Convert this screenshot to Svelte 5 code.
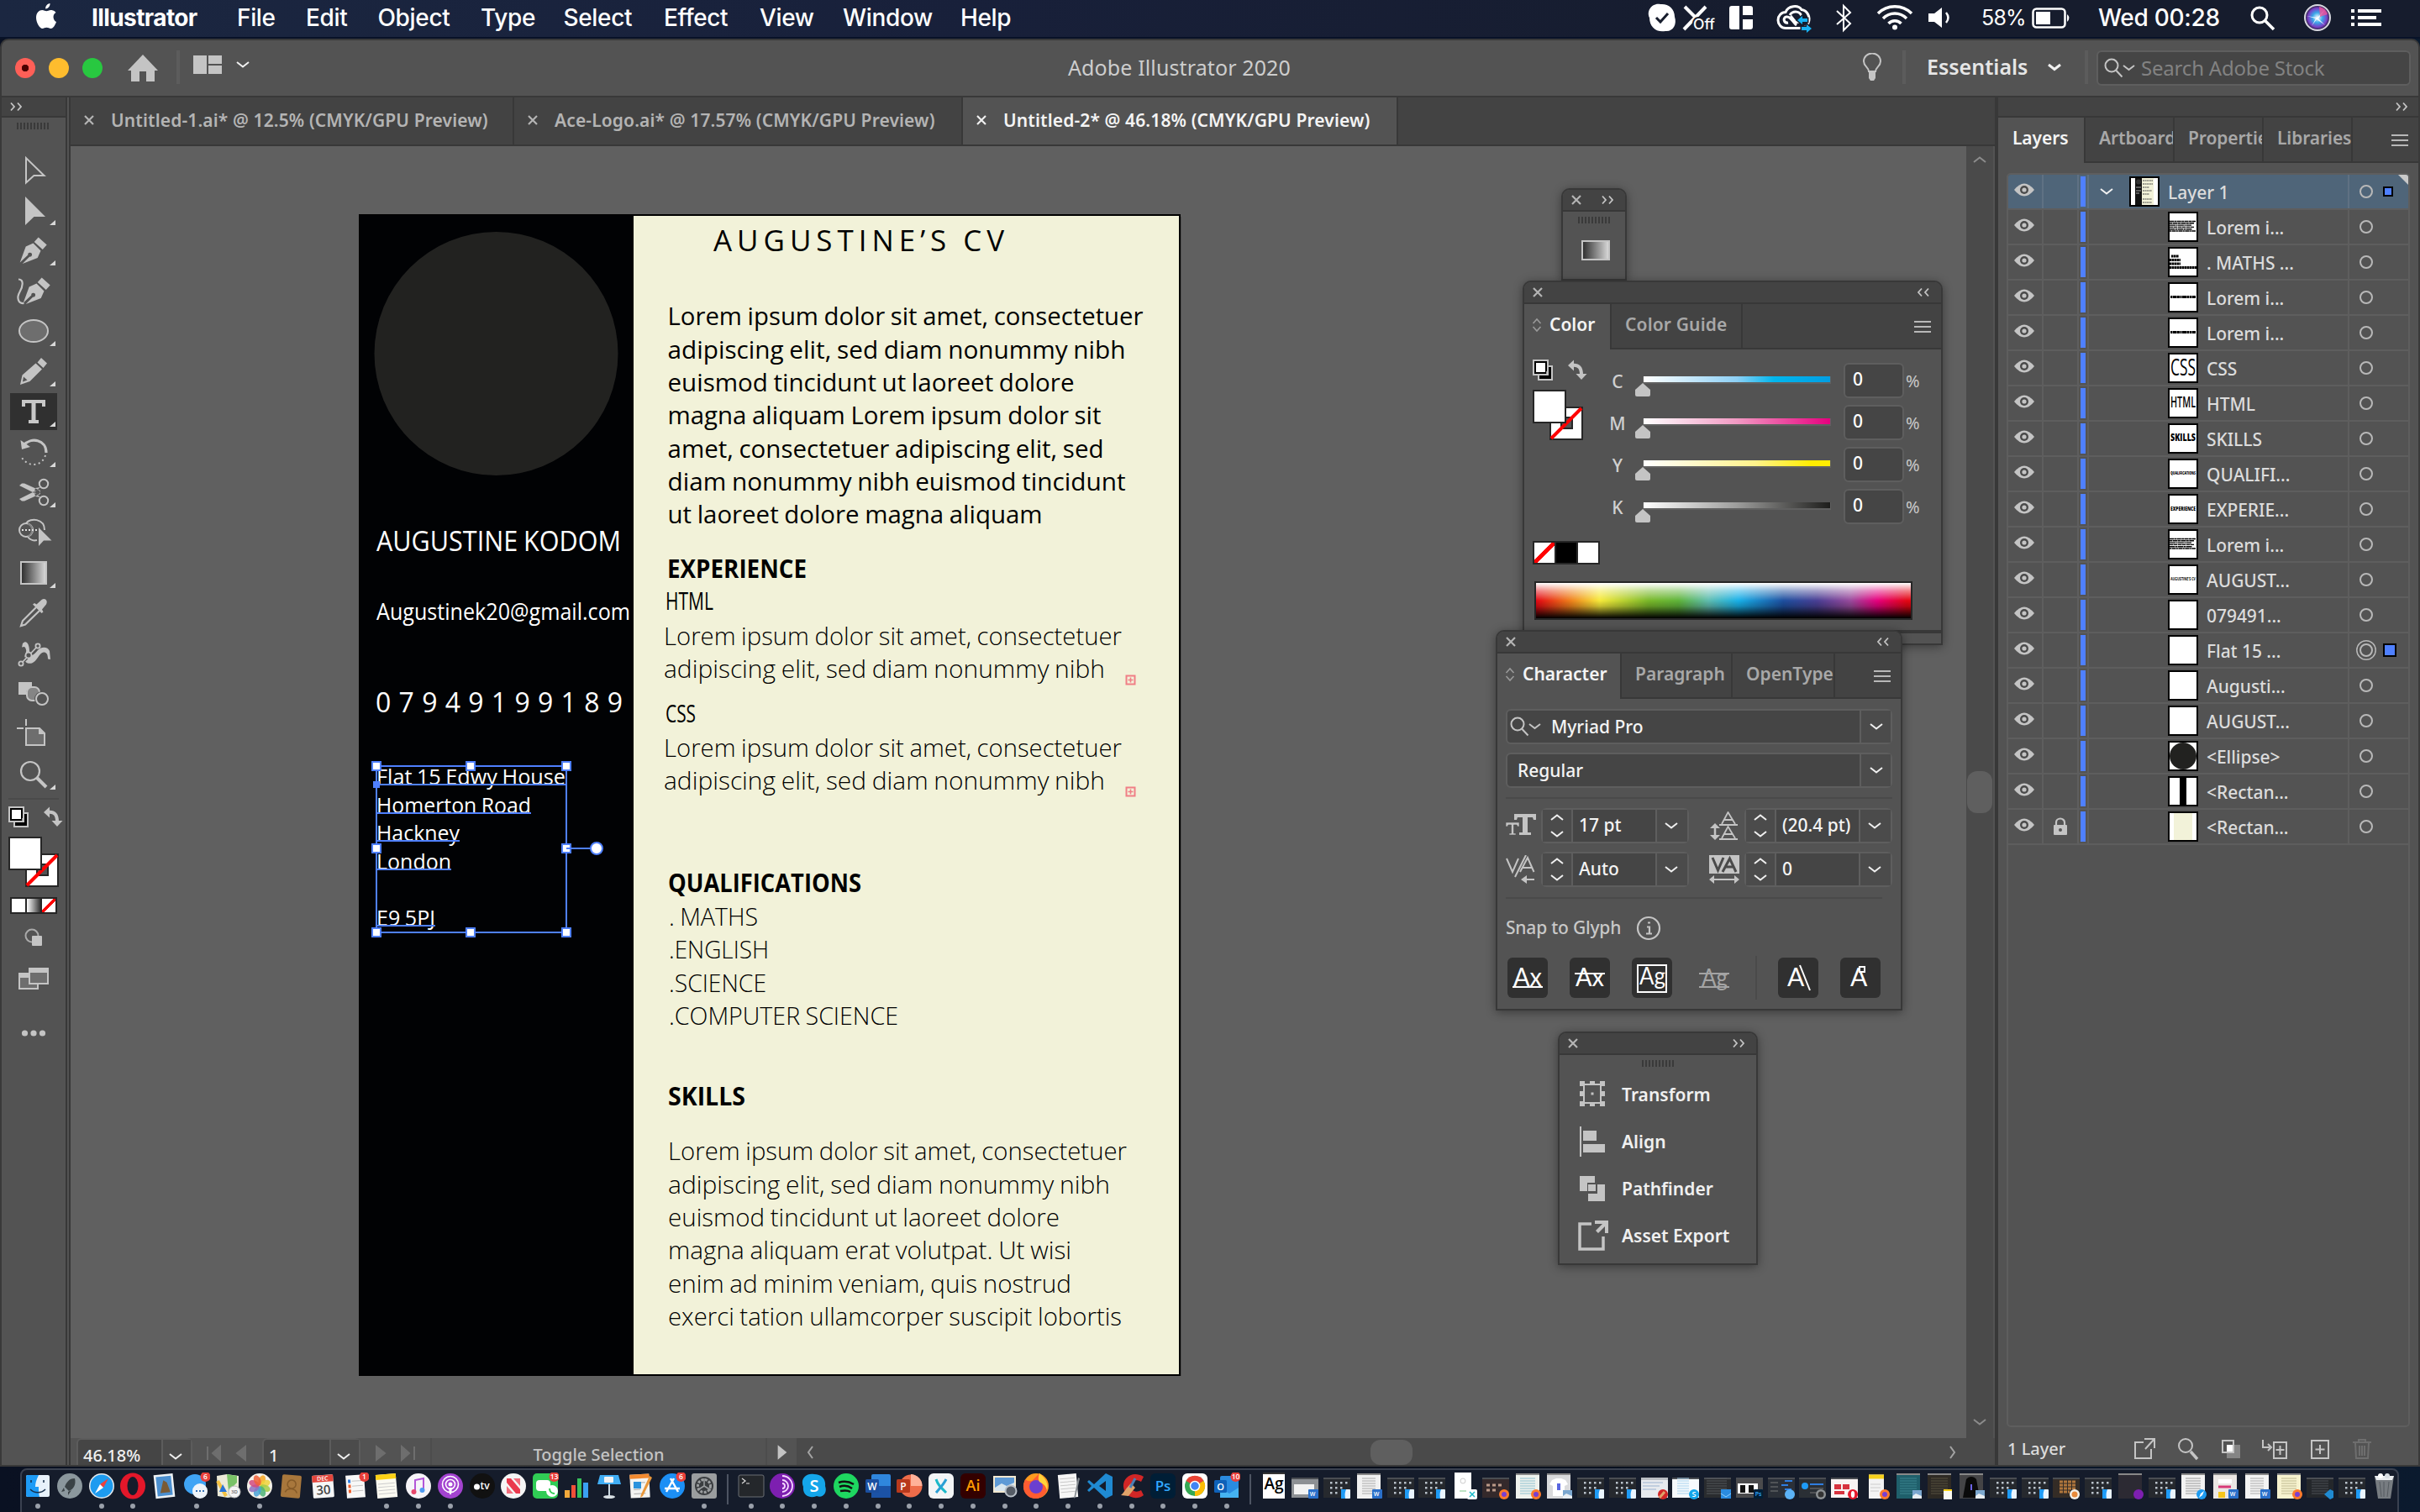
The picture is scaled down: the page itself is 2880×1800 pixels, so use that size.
<script>
  const menus = ['File', 'Edit', 'Object', 'Type', 'Select', 'Effect', 'View', 'Window', 'Help'];

  const docTabs = [
    { title: 'Untitled-1.ai* @ 12.5% (CMYK/GPU Preview)', on: false },
    { title: 'Ace-Logo.ai* @ 17.57% (CMYK/GPU Preview)', on: false },
    { title: 'Untitled-2* @ 46.18% (CMYK/GPU Preview)', on: true }
  ];

  const nib = (dx) => `<g transform="translate(${dx} 0)" fill="#c4c4c4"><path d="M45.7 8.5l10 8.9-5 5.6-10-9z"/><path d="M39.5 15.4l9 9.2-3.8 8.4-18 7 8.6-8.4a2.4 2.4 0 1 0-2-2l-9.6 8.8 7-19z"/></g>`;

  // Each drawing lives in a 76 x 48 slot whose x axis starts at 2.
  const tools = [
    { art: '<path d="M31 10V39.5l9.4-8.5H52.500z" fill="none" stroke="#c4c4c4" stroke-width="2"/>' },
    { more: true, art: '<path d="M30 8V42l10.500-10H54z" fill="#c4c4c4"/>' },
    { more: true, art: nib(0) },
    { art: nib(4) + '<path d="M22 10.500c7 0 5 9 1.500 15-4 7-2 14 5 13.500" fill="none" stroke="#c4c4c4" stroke-width="2.200"/>' },
    { more: true, art: '<ellipse cx="40" cy="24" rx="17" ry="13" fill="#6e6e6e" stroke="#c4c4c4" stroke-width="2"/>' },
    { more: true, art: '<path d="M49 8l7 6.500-4.500 5.500-7-6.500zM42.500 14.500l7.500 7-14.500 14.500-11.500 4 2.500-11.500z" fill="#c4c4c4"/><path d="M28 30.500l4.500 4-5.500 2z" fill="#535353"/>' },
    { more: true, on: true, art: '<path d="M26 10h28v8h-4v-4h-7.500v20h3.500v4h-12v-4h3.500v-20h-7.500v4h-4z" fill="#c8c8c8"/>' },
    { more: true, art: '<path d="M24.500 10l11.500 8-10 3z" fill="#c4c4c4"/><path d="M28 16c9-10 27-7 27 9" fill="none" stroke="#c4c4c4" stroke-width="3.200"/><path d="M54 28c-4 14-22 15-29 1" fill="none" stroke="#c4c4c4" stroke-width="2" stroke-dasharray="2 3.600"/>' },
    { more: true, art: '<g fill="none" stroke="#c4c4c4" stroke-width="2"><circle cx="52" cy="14" r="5.200"/><circle cx="52" cy="34" r="5.200"/></g><path d="M23 16l3-2.500h3L48 22l-1 3.500-2 1.500zM23 32l3 2.500h3L48 26l-1-3.500-2-1.500zM41 24l7 6-6-1zM41 24l7-6-6 1z" fill="#c4c4c4"/>' },
    { more: false, art: '<circle cx="31" cy="21" r="8" fill="none" stroke="#c4c4c4" stroke-width="2"/><path d="M33 13.500a8 8 0 0 1 0 15" fill="none" stroke="#858585" stroke-width="2"/><path d="M31 13C36 6 53 7 53 21M33 29c3 4 7 5 11 4" fill="none" stroke="#c4c4c4" stroke-width="2"/><path d="M26 21h19" stroke="#e0e0e0" stroke-width="2" stroke-dasharray="2 2"/><path d="M46 18v22l6-6.500h9.500z" fill="#c4c4c4"/>' },
    { more: true, art: '<rect x="25" y="11" width="30" height="26" fill="url(#grey)" stroke="#c4c4c4" stroke-width="2"/>' },
    { art: '<path d="M43 17L27 33l-2 6 5-1.500L47 21" fill="none" stroke="#c4c4c4" stroke-width="2.200"/><path d="M39 13.500l2-1.500 2.500 1.500 6-5.500c4-3 8 1 5.500 5.500l-5 6 1.500 3-2 1.500z" fill="#c4c4c4"/>' },
    { art: '<path d="M27 12c5-5 8 2 8 9l-2 6c5 0 8-2 12-7 5-5 12-4 14 1l1 10-3-.500c0-6-2-8-5-8-5 0-8 11-14 13-5 1-9-1-9-5 0-5 3-8 2-11-1-4-2-4-5-3z" fill="#c4c4c4"/><path d="M26 35L45 15" stroke="#535353" stroke-width="4"/><path d="M26 35L45 15" stroke="#c4c4c4" stroke-width="1.800"/><g fill="#535353" stroke="#c4c4c4" stroke-width="1.800"><circle cx="25" cy="36" r="2.600"/><circle cx="45" cy="15" r="2.600"/><circle cx="34" cy="26" r="3.500"/></g>' },
    { art: '<path d="M22 10h16v6c-5 0-7 4-7 9h-9z" fill="#c4c4c4"/><rect x="32" y="16" width="15" height="16" rx="6" fill="#858585" stroke="#c4c4c4" stroke-width="2"/><circle cx="50" cy="30" r="9" fill="#535353"/><circle cx="50" cy="30" r="7" fill="#535353" stroke="#c4c4c4" stroke-width="2"/>' },
    { art: '<path d="M31 6v8M20 17h8" stroke="#c4c4c4" stroke-width="2"/><path d="M31 17h16l6 6v14H31z" fill="#6e6e6e" stroke="#c4c4c4" stroke-width="2"/><path d="M46 17v7h7z" fill="#c4c4c4"/>' },
    { more: true, art: '<circle cx="36" cy="20" r="11" fill="none" stroke="#c4c4c4" stroke-width="2.200"/><path d="M44 28l11 11" stroke="#c4c4c4" stroke-width="4"/>' }
  ];

  // [text, x, baseline, width, size, weight, colour]
  const copy = [
    ['AUGUSTINE KODOM', 448, 656, 291, 33, 400, '#fff'],
    ['Augustinek20@gmail.com', 448, 738, 302, 26.5, 400, '#fff'],
    ['Flat 15 Edwy House', 448, 934, 225, 25.5, 400, '#fff'],
    ['Homerton Road', 448, 967.5, 184, 25.5, 400, '#fff'],
    ['Hackney', 448, 1001, 99, 25.5, 400, '#fff'],
    ['London', 448, 1035, 89, 25.5, 400, '#fff'],
    ['E9 5PJ', 448, 1101.5, 70, 25.5, 400, '#fff'],
    ['Lorem ipsum dolor sit amet, consectetuer', 794.5, 387, 566, 30, 400, '#000'],
    ['adipiscing elit, sed diam nonummy nibh', 794.5, 426.5, 545, 30, 400, '#000'],
    ['euismod tincidunt ut laoreet dolore', 794.5, 466, 484, 30, 400, '#000'],
    ['magna aliquam Lorem ipsum dolor sit', 794.5, 505, 516, 30, 400, '#000'],
    ['amet, consectetuer adipiscing elit, sed', 794.5, 544.5, 519, 30, 400, '#000'],
    ['diam nonummy nibh euismod tincidunt', 794.5, 583.5, 545, 30, 400, '#000'],
    ['ut laoreet dolore magna aliquam', 794.5, 622.5, 446, 30, 400, '#000'],
    ['EXPERIENCE', 794, 688, 166, 30, 700, '#000'],
    ['HTML', 792, 726, 57, 30, 400, '#000'],
    ['Lorem ipsum dolor sit amet, consectetuer', 790, 768, 545, 30, 300, '#000'],
    ['adipiscing elit, sed diam nonummy nibh', 790, 807, 525, 30, 300, '#000'],
    ['CSS', 792, 860, 36, 30, 400, '#000'],
    ['Lorem ipsum dolor sit amet, consectetuer', 790, 901, 545, 30, 300, '#000'],
    ['adipiscing elit, sed diam nonummy nibh', 790, 940, 525, 30, 300, '#000'],
    ['QUALIFICATIONS', 795, 1062, 230, 30, 700, '#000'],
    ['. MATHS', 796, 1102, 106, 30, 300, '#000'],
    ['.ENGLISH', 796, 1141, 119, 30, 300, '#000'],
    ['.SCIENCE', 796, 1180.5, 116, 30, 300, '#000'],
    ['.COMPUTER SCIENCE', 796, 1220, 273, 30, 300, '#000'],
    ['SKILLS', 795, 1316, 92, 30, 700, '#000'],
    ['Lorem ipsum dolor sit amet, consectetuer', 795, 1381, 546, 30, 300, '#000'],
    ['adipiscing elit, sed diam nonummy nibh', 795, 1420.5, 526, 30, 300, '#000'],
    ['euismod tincidunt ut laoreet dolore', 795, 1459.5, 466, 30, 300, '#000'],
    ['magna aliquam erat volutpat. Ut wisi', 795, 1499, 480, 30, 300, '#000'],
    ['enim ad minim veniam, quis nostrud', 795, 1538.5, 480, 30, 300, '#000'],
    ['exerci tation ullamcorper suscipit lobortis', 795, 1577.5, 540, 30, 300, '#000']
  ];
  const underlines = [[934, 225], [968, 184], [1001, 99], [1035, 89], [1102, 70]];
  const handles = [[448, 912], [560, 912], [674, 912], [448, 1010], [674, 1010], [448, 1110], [560, 1110], [674, 1110]];

  const inks = ['C', 'M', 'Y', 'K'];

  const layers = [
    { name: 'Lorem i...', art: 'para' },
    { name: '. MATHS ...', art: 'list' },
    { name: 'Lorem i...', art: 'line' },
    { name: 'Lorem i...', art: 'line' },
    { name: 'CSS', art: 'word', word: 'CSS', size: 27, weight: 500 },
    { name: 'HTML', art: 'word', word: 'HTML', size: 18, weight: 600 },
    { name: 'SKILLS', art: 'word', word: 'SKILLS', size: 12, weight: 800 },
    { name: 'QUALIFI...', art: 'word', word: 'QUALIFICATIONS', size: 5.5, weight: 800 },
    { name: 'EXPERIE...', art: 'word', word: 'EXPERIENCE', size: 7, weight: 800 },
    { name: 'Lorem i...', art: 'para' },
    { name: 'AUGUST...', art: 'word', word: 'AUGUSTINE’S CV', size: 4.8, weight: 700 },
    { name: '079491...' },
    { name: 'Flat 15 ...', target: true },
    { name: 'Augusti...' },
    { name: 'AUGUST...' },
    { name: '<Ellipse>', art: 'ellipse' },
    { name: '<Rectan...', art: 'bar' },
    { name: '<Rectan...', art: 'cream', locked: true }
  ];

  const disc = (fill) => `<circle cx="16" cy="16" r="15" fill="${fill}"/>`;
  const tile = (fill, r = 6) => `<rect x="1" y="1" width="30" height="30" rx="${r}" fill="${fill}"/>`;
  const word = (t, fill, size, x = 16, y = 21) => `<text x="${x}" y="${y}" text-anchor="middle" font-family="Open Sans, sans-serif" font-weight="600" font-size="${size}" fill="${fill}">${t}</text>`;
  const badge = (t) => `<circle cx="26.500" cy="5" r="6" fill="#e8403a"/>` + word(t, '#fff', 8.500, 26.500, 8);
  const petals = ['#f7a823', '#f0d33c', '#a3cc46', '#4cb478', '#4aa3d8', '#8d70c0', '#d24b80', '#f0603a']
    .map((c, i) => `<ellipse cx="16" cy="9" rx="4" ry="6.500" fill="${c}" opacity=".85" transform="rotate(${22 + i * 45} 16 16)"/>`).join('');

  const apps = [
    { run: 1, art: '<rect x="2" y="3" width="28" height="26" rx="2" fill="#e8f2fb"/><path d="M4 3h13c-3 6-4 10-4 14h4c0 5 0 8 1 12H4a2 2 0 0 1-2-2V5a2 2 0 0 1 2-2z" fill="#1e9bf6"/><path d="M8 9v3M23 9v3M7 20c5 5 13 5 18 0" fill="none" stroke="#16304c" stroke-width="1.500"/>' },
    { art: disc('#8b979d') + '<path d="M22 7c-7 0-10 5-12 10l5 5c5-2 9-7 7-15zM9 18l-3 5 4-1M14 23l0 4 4-6" fill="#3a4246"/>' },
    { run: 1, art: disc('#e6e9ec') + '<circle cx="16" cy="16" r="13.500" fill="#1d9bf0"/><path d="M24 7L18 18l-4-4z" fill="#f0413a"/><path d="M8 25l6-11 4 4z" fill="#fff"/>' },
    { run: 1, art: '<ellipse cx="16" cy="16" rx="15" ry="15.500" fill="#e3172a"/><ellipse cx="16" cy="16" rx="6.500" ry="11" fill="#151c2b"/>' },
    { art: '<g transform="rotate(-6 16 16)"><rect x="4" y="2" width="23" height="28" fill="#eef2f5"/><rect x="6.500" y="4.500" width="18" height="23" fill="#4b8fd0"/><path d="M10 24l5-15 4 3 3 12z" fill="#7a5a35"/></g>' },
    { run: 1, art: '<ellipse cx="14" cy="14" rx="13" ry="12" fill="#3fa4f5"/><circle cx="20" cy="22" r="9" fill="#eef4fa"/><path d="M15 22h2M19 22h2M23 22h2" stroke="#3571b5" stroke-width="2"/>' + badge('6') },
    { art: '<path d="M2 4l12-2 14 2v24l-13 2-12-2z" fill="#ecead8"/><path d="M14 2l12 2v8L16 22z" fill="#79c267"/><path d="M3 10l10 18" stroke="#f5c242" stroke-width="4"/><path d="M9 14l5 9h-9z" fill="#2874d8"/><circle cx="23" cy="23" r="7" fill="#f4f4f4" stroke="#bbb"/>' + word('3D', '#666', 6, 23, 25) },
    { run: 1, art: disc('#f4f1ea') + petals },
    { art: '<g transform="rotate(5 16 16)"><rect x="4" y="3" width="23" height="27" rx="2" fill="#a8773c"/><circle cx="16" cy="14" r="5" fill="none" stroke="#855a28" stroke-width="1.500"/><path d="M9 24c2-6 12-6 14 0" fill="none" stroke="#855a28" stroke-width="1.500"/></g>' },
    { art: '<g transform="rotate(-4 16 16)"><rect x="3" y="3" width="25" height="27" rx="1.500" fill="#f6f6f6"/><rect x="3" y="3" width="25" height="8" fill="#e3453b"/>' + word('DEC', '#fff', 7, 15.500, 9.500) + word('30', '#444', 15, 15.500, 26) + '</g>' },
    { art: '<g transform="rotate(-4 16 16)"><rect x="5" y="3" width="22" height="27" fill="#f8f8f8"/><path d="M12 10h13M12 16h13M12 22h13" stroke="#c4c4c4"/><path d="M9 8v4" stroke="#2f7de0" stroke-width="3"/><path d="M9 14v4M9 20v4" stroke="#f0602c" stroke-width="3"/></g>' + badge('1') },
    { run: 1, art: '<g transform="rotate(-5 16 16)"><rect x="4" y="2" width="24" height="28" fill="#fbfaf2"/><rect x="4" y="2" width="24" height="6" fill="#fcd116"/><path d="M6 13h20M6 17h20M6 21h20M6 25h20" stroke="#ccc"/></g>' },
    { run: 1, art: disc('#f6f4f8') + '<path d="M12 23V9l10-2v13" fill="none" stroke="#b355d8" stroke-width="2"/><circle cx="10.500" cy="23" r="3" fill="#e8486c"/><circle cx="20.500" cy="21" r="3" fill="#4f9af0"/>' },
    { run: 1, art: disc('#a343d0') + '<g fill="none" stroke="#fff" stroke-width="1.600"><circle cx="16" cy="14" r="9.500"/><circle cx="16" cy="14" r="5.500"/></g><circle cx="16" cy="14" r="2.500" fill="#fff"/><path d="M14 18h4l-1 8h-2z" fill="#fff"/>' },
    { art: disc('#111') + word('tv', '#fff', 12, 19, 20) + '<circle cx="9.500" cy="17" r="3.500" fill="#fff"/>' },
    { art: disc('#f5f5f5') + '<path d="M8 7h5l11 13v5h-5L8 12z" fill="#ea3a4e"/><path d="M8 16v9h8zM24 16V7h-8z" fill="#f26d7c"/>' },
    { art: tile('#30cc55', 5) + '<rect x="5" y="9" width="17" height="13" rx="4" fill="#fff"/><circle cx="24" cy="22" r="7" fill="#fff"/><path d="M21 19c0 4 3 6 6 6" fill="none" stroke="#30cc55" stroke-width="2"/>' + badge('13') },
    { art: '<path d="M1 30V21h6v9z" fill="#f2a93b"/><path d="M9 30V15h5v15z" fill="#f05038"/><path d="M16 30V7h5v23z" fill="#36c15b"/><path d="M23 30V12h6v18z" fill="#3aa0f2"/>' },
    { art: '<path d="M5 3h22l3 11H2z" fill="#41aef5"/><rect x="10" y="5" width="11" height="7" rx="1" fill="#f3f3f3"/><path d="M16 14v14" stroke="#c9d6df" stroke-width="2"/><ellipse cx="16" cy="29" rx="7" ry="2" fill="#d9e0e5"/>' },
    { art: '<g transform="rotate(-3 16 16)"><rect x="4" y="2" width="23" height="28" fill="#f4f4f2"/><rect x="4" y="2" width="23" height="5" fill="#f28a30"/><path d="M8 12h14M8 16h8M8 20h8M8 25h14" stroke="#aaa"/></g><rect x="8" y="11" width="9" height="8" fill="#2c93dd"/><path d="M27 4l3 2-11 22-3 2 1-4z" fill="#e9973a"/>' },
    { art: disc('#1c8ff5') + '<path d="M18 7l-9 16M14 7l9 16M7 19h18" stroke="#fff" stroke-width="2.500"/>' + badge('6') },
    { run: 1, art: tile('#9a9d9f', 3) + '<circle cx="16" cy="16" r="11" fill="#3a3d40"/><circle cx="16" cy="16" r="7.500" fill="none" stroke="#9b9ea0" stroke-width="3" stroke-dasharray="3 1.500"/><path d="M16 16V7M16 16l8 5M16 16l-8 5" stroke="#9b9ea0" stroke-width="1.500"/>' }
  ];
  const tools2 = [
    { run: 1, art: '<rect x="1" y="3" width="30" height="26" rx="2" fill="#24272b" stroke="#6b6f75"/><path d="M5 7l4 3-4 3M10 13h4" fill="none" stroke="#ddd" stroke-width="1.200"/>' },
    { run: 1, art: disc('#7d1fb0') + '<g fill="none" stroke="#f5d9ff" stroke-width="1.800"><path d="M16 4a12 12 0 0 1 0 24M16 9a7 7 0 0 1 0 14M16 13a3 3 0 0 1 0 6"/></g>' },
    { run: 1, art: '<path d="M16 2c9 0 14 6 13 14 3 8-3 15-10 12C8 32 2 25 3 17-1 8 6 0 16 2z" fill="#14a6ea"/>' + word('S', '#fff', 20, 16, 23) },
    { run: 1, art: disc('#1ed760') + '<path d="M7 12c6-2 13-1 18 2M8 17c5-2 11-1 15 2M9 22c5-1 9-1 12 1" fill="none" stroke="#111" stroke-width="2.500"/>' },
    { run: 1, art: '<rect x="8" y="2" width="23" height="28" rx="2" fill="#2f86dd"/><rect x="8" y="16" width="23" height="14" fill="#1b52a6"/><rect x="1" y="8" width="16" height="16" rx="1.500" fill="#1b4fa0"/>' + word('W', '#fff', 12, 9, 20.500) },
    { run: 1, art: '<circle cx="18" cy="16" r="13.500" fill="#ee6c4a"/><path d="M18 2a14 14 0 0 1 13.500 14H18z" fill="#ffb199"/><rect x="1" y="8" width="16" height="16" rx="1.500" fill="#b8391c"/>' + word('P', '#fff', 12, 9, 20.500) },
    { run: 1, art: tile('#f3f5f6') + '<path d="M10 8c2 6 4 8 12 16" fill="none" stroke="#1cb9c9" stroke-width="3"/><path d="M22 8c-3 6-6 9-12 16" fill="none" stroke="#2b9fd4" stroke-width="3"/>' },
    { run: 1, art: tile('#330000') + word('Ai', '#ff9a00', 18, 16, 22) },
    { run: 1, art: '<rect x="2" y="4" width="27" height="20" fill="#f2e8d0"/><rect x="4" y="6" width="23" height="16" fill="#5e9ad6"/><path d="M4 18l8-5 6 3 9-4v10H4z" fill="#d8e6ef"/><circle cx="23" cy="22" r="6.500" fill="#555c66" stroke="#b9c0c8" stroke-width="2"/>' },
    { run: 1, art: disc('#ff9a1f') + '<path d="M3 8c3 3 5 2 8 2l9-9c8 6 11 12 9 20-2 7-9 10-14 10C7 31 0 24 1 15z" fill="#ff5c32"/><circle cx="16" cy="17" r="8" fill="#6a3fd0"/><path d="M20 1c8 6 11 13 9 20-2-7-6-8-9-10-2-3-1-7 0-10z" fill="#ffd43a"/>' },
    { run: 1, art: '<g transform="rotate(-5 16 16)"><rect x="5" y="2" width="22" height="28" fill="#f6f6f6"/><path d="M7 7h18M7 11h18M7 15h18M7 19h18M7 23h18" stroke="#c9c9c9"/></g><path d="M28 6l2 1-5 22-2 2z" fill="#83898f"/>' },
    { run: 1, art: '<path d="M23 1l8 4v22l-8 4L9 18l-6 5-2-2 5-5-5-5 2-2 6 5zM23 10l-8 6 8 6z" fill="#1f8ad2"/>' },
    { run: 1, art: '<path d="M30 5c-14-8-25 2-24 12 1 12 15 17 24 10l-3-6c-7 4-12 0-12-5 0-6 6-9 12-5z" fill="#d22626"/><path d="M15 13l5 5-8 10-9-1c4-3 6-9 12-14z" fill="#e0a36a"/><path d="M14 18L20 7" stroke="#4c7fb5" stroke-width="3"/>' },
    { run: 1, art: tile('#001e36') + word('Ps', '#31a8ff', 17, 16, 22) },
    { run: 1, art: tile('#fff') + '<circle cx="16" cy="16" r="12" fill="#34a853"/><path d="M16 16L5.500 10A12 12 0 0 1 26.500 10z" fill="#ea4335"/><path d="M16 16l10.500-6A12 12 0 0 1 16 28z" fill="#fbbc05"/><circle cx="16" cy="16" r="5.500" fill="#4285f4" stroke="#fff" stroke-width="1.500"/>' },
    { run: 1, art: '<rect x="8" y="4" width="22" height="26" rx="2" fill="#2a8be0"/><path d="M8 18l11 7 11-7v12H8z" fill="#45b3f2"/><rect x="1" y="9" width="15" height="15" rx="1.500" fill="#0f61b8"/>' + word('O', '#fff', 11, 8.500, 20.500) + badge('10') }
  ];

  const marks = {
    finder: '<rect x="21" y="20" width="11" height="11" rx="1" fill="#e9f4ff"/><path d="M21 20h6c-1 3-2 5-1 11h-5z" fill="#1e9bf6"/>',
    word: '<rect x="20" y="20" width="12" height="11" rx="1" fill="#2a6fc9"/>' + word('W', '#fff', 7, 25, 28),
    x: '<rect x="20" y="20" width="12" height="12" rx="2" fill="#fff"/><path d="M23 23l6 6M29 23l-6 6" stroke="#1cb9c9" stroke-width="1.500"/>',
    fox: '<circle cx="26" cy="26" r="6" fill="#ff7a2c"/><circle cx="26" cy="26" r="3" fill="#7b3fd0"/>',
    cc: '<circle cx="26" cy="26" r="6" fill="#d22626"/><path d="M22 30l6-7" stroke="#e0a36a" stroke-width="3"/>',
    skype: '<circle cx="26" cy="26" r="6" fill="#14a6ea"/>' + word('S', '#fff', 9, 26, 29),
    mail: '<rect x="20" y="20" width="12" height="11" fill="#2a8be0"/><path d="M20 25l6 4 6-4" fill="none" stroke="#8fd0ff"/>',
    ps: '<rect x="21" y="20" width="11" height="11" rx="1" fill="#001e36"/>' + word('Ps', '#31a8ff', 7, 26.500, 28),
    chat: '<circle cx="26" cy="26" r="6" fill="#5bb2f6"/>',
    gear: '<circle cx="26" cy="26" r="6" fill="#8d9194"/><circle cx="26" cy="26" r="3.500" fill="#333"/>',
    opera: '<circle cx="26" cy="26" r="6" fill="#e3172a"/><ellipse cx="26" cy="26" rx="2.200" ry="4" fill="#fff"/>',
    pic: '<rect x="21" y="21" width="11" height="10" fill="#7ba7cf"/><path d="M21 28l4-3 7 3v3H21z" fill="#e8eef2"/>',
    note: '<rect x="21" y="20" width="10" height="12" fill="#fbfaf2"/><path d="M21 21h10" stroke="#fcd116" stroke-width="2"/>',
    photos: '<circle cx="26" cy="26" r="6" fill="#f4f1ea"/><circle cx="26" cy="26" r="3.500" fill="#e88a3a"/>',
    tor: '<circle cx="26" cy="26" r="6" fill="#7d1fb0"/>',
    safari: '<circle cx="26" cy="26" r="6" fill="#1d9bf0"/><path d="M29 22l-2 5-4 3 2-5z" fill="#fff"/>',
    code: '<path d="M28 20l4 2v8l-4 2-7-6z" fill="#1f8ad2"/>'
  };
  const dots = '<g fill="#b9c2ca"><path d="M8 11h2.500v2.500H8zM14 11h2.500v2.500h-2.500zM20 11h2.500v2.500h-2.500zM26 11h2.500v2.500h-2.500zM8 17h2.500v2.500H8zM14 17h2.500v2.500h-2.500zM20 17h2.500v2.500h-2.500zM8 23h2.500v2.500H8zM14 23h2.500v2.500h-2.500z"/></g>';
  const rows = (c, x, w) => [7, 10, 13, 16, 19, 22, 25].map((y) => `<path d="M${x} ${y}h${w}" stroke="${c}"/>`).join('');
  const win = (fill, body, mark, tall = false) =>
    (tall ? `<rect x="2" y="1" width="28" height="30" fill="${fill}"/><path d="M2 2h28" stroke="#888" stroke-width="2"/>`
          : `<rect x="0" y="6" width="32" height="24" fill="${fill}"/><path d="M0 7h32" stroke="#4a4d52" stroke-width="2"/>`) + body + marks[mark];
  const finder = win('#26292e', dots, 'finder');
  const windows = [
    '<rect x="3" y="0" width="26" height="31" fill="#fff"/><path d="M3 1h26" stroke="#333" stroke-width="2"/>' + word('Ag', '#000', 19, 16, 20),
    win('#8d9094', '<path d="M3 14h24v12H3z" fill="#f2f2f2"/>', 'word'),
    finder,
    win('#f1f1f1', rows('#aaa', 8, 16), 'word', true),
    finder, finder,
    '<rect x="5" y="0" width="20" height="31" fill="#fff"/><circle cx="15" cy="10" r="3" fill="none" stroke="#ccc"/><path d="M11 22h8" stroke="#7cc68a"/>' + marks.x,
    win('#34292b', '<path d="M5 15h4M12 15h4M19 15h4M5 21h4M12 21h4" stroke="#b98" stroke-width="3"/>', 'fox'),
    win('#eef2ee', rows('#8dc0ce', 7, 18), 'fox', true),
    win('#d9dadc', '<path d="M8 9l5-2h6l5 2 3 5-4 2v12H9V16l-4-2z" fill="#fff"/><path d="M16 13v8" stroke="#5a67e0" stroke-width="4"/>', 'pic', true),
    finder, finder,
    win('#e7eaee', '<path d="M2 12h24M2 16h20M2 20h16" stroke="#9bb3d0"/><path d="M0 6h32v3H0z" fill="#b9bdc3"/>', 'cc'),
    win('#f6fafd', rows('#a7d3ee', 6, 14), 'skype'),
    win('#2a2c2f', rows('#55585c', 3, 24), 'mail'),
    win('#4a4a4c', '<path d="M2 13h24v12H2z" fill="#fff"/><path d="M5 15h6v9H5zM15 15h6v9h-6z" fill="#111"/>', 'ps'),
    win('#2b3038', '<path d="M3 12h9M3 17h9M3 22h9" stroke="#777"/><path d="M20 10h9M16 15h8M20 20h8" stroke="#2f7de0" stroke-width="2"/>', 'chat'),
    win('#2a2f35', '<circle cx="7" cy="16" r="4" fill="#1e9bf6"/><path d="M13 14h16" stroke="#2f7de0" stroke-width="2"/><path d="M13 19h16M13 24h8" stroke="#777"/>', 'gear'),
    win('#f8f3f3', '<path d="M4 14h8v6H4zM14 14h8v6h-8zM4 22h12v4H4z" fill="#d6323e"/>', 'opera'),
    '<rect x="7" y="0" width="18" height="31" fill="#f3f3f3"/><path d="M7 1h18" stroke="#222" stroke-width="3"/><path d="M7 5h18" stroke="#f8d21c" stroke-width="5"/><path d="M9 14h12M9 18h12M9 22h10" stroke="#ccc"/>' + marks.fox,
    win('#1f5f6b', rows('#3d8590', 6, 20), 'pic', true),
    win('#2e2a24', rows('#57503f', 6, 20), 'note', true),
    win('#444446', '<path d="M10 8c3-4 9-4 12 0l4 22H6z" fill="#0a0a0a"/><path d="M16 14v7" stroke="#6c63e8" stroke-width="2"/>', 'pic', true),
    finder, finder,
    win('#342c26', '<path d="M8 11h20M8 15h20M8 19h20M8 23h12" stroke="#b0763c" stroke-width="3" stroke-dasharray="4 1"/>', 'photos'),
    finder,
    win('#2c2a33', '', 'tor', true),
    finder,
    win('#f2f2f2', rows('#999', 7, 18), 'safari', true),
    win('#ebe7e4', '<path d="M8 8h16v5H8z" fill="#fff"/><path d="M8 17h15" stroke="#d83a78" stroke-width="3"/><path d="M8 23h8v7H8z" fill="#f5c51c"/>', 'word', true),
    win('#f4f4f4', rows('#aaa', 8, 16), 'word', true),
    win('#f7f3cf', rows('#bdb88e', 7, 18), 'fox', true),
    win('#24272b', rows('#4d5157', 6, 20), 'code'),
    finder
  ];
</script>

{#snippet chevron()}
  <svg class="chev" viewBox="0 0 18 10"><path d="M2 2l7 5.500L16 2" /></svg>
{/snippet}

{#snippet cross()}
  <svg class="cross" viewBox="0 0 14 14"><path d="M2 2l10 10M12 2L2 12" /></svg>
{/snippet}

{#snippet fold(dir)}
  <svg class="fold" viewBox="0 0 16 12">
    <path d={dir === 'left' ? 'M6 1.500L2 6l4 4.500M14 1.500L10 6l4 4.500' : 'M2 1.500L6 6l-4 4.500M10 1.500L14 6l-4 4.500'} />
  </svg>
{/snippet}

{#snippet burger()}
  <svg class="burger" viewBox="0 0 20 16"><path d="M0 2h20M0 8h20M0 14h20" /></svg>
{/snippet}

{#snippet sort()}
  <svg class="sort" viewBox="0 0 12 18"><path d="M1.500 7L6 2l4.500 5M1.500 11L6 16l4.500-5" /></svg>
{/snippet}

{#snippet lens()}
  <svg class="lens" viewBox="0 0 40 28">
    <circle cx="10" cy="11" r="7.500" /><path d="M15.500 17l7 7.500M24 11l6.500 5L37 11" />
  </svg>
{/snippet}

{#snippet stepper()}
  <svg class="stepper" viewBox="0 0 34 38"><path d="M10 12l7-5.500 7 5.500M10 26l7 5.500 7-5.500" /></svg>
{/snippet}

{#snippet eye()}
  <span class="eye"><svg viewBox="0 0 24 16"><path d="M0 8Q12-7 24 8Q12 23 0 8z" /><circle cx="12" cy="8" r="5" /><circle cx="12" cy="8" r="2.600" class="pupil" /></svg></span>
{/snippet}

{#snippet swatches()}
  <svg class="swatches" viewBox="0 0 66 98">
    <rect x="7" y="8" width="16" height="16" fill="#000" stroke="#c4c4c4" stroke-width="2" />
    <rect x="1" y="1" width="17" height="17" fill="#fff" stroke="#c4c4c4" stroke-width="2" />
    <rect x="3" y="3" width="13" height="13" fill="#fff" stroke="#000" stroke-width="2" />
    <path d="M13 18h4v-4" fill="none" stroke="#c4c4c4" stroke-width="1.500" />
    <path d="M47 7c8-1 11 3 11 11" fill="none" stroke="#c4c4c4" stroke-width="4" />
    <path d="M42 7l7-6.500v13zM51.500 17h13L58 24z" fill="#c4c4c4" />
    <rect x="21" y="57" width="38" height="38" fill="#fff" stroke="#262626" stroke-width="2" />
    <rect x="34" y="69" width="13" height="13" fill="#535353" stroke="#262626" stroke-width="2" />
    <path d="M22 94L58 58" stroke="#f00" stroke-width="4" />
    <rect x="1" y="37" width="38" height="38" fill="#fff" stroke="#262626" stroke-width="2" />
  </svg>
{/snippet}

{#snippet dockItem(item)}
  <li>
    <svg class="app" viewBox="0 0 32 32">{@html item.art}</svg>
    {#if item.run}<i></i>{/if}
  </li>
{/snippet}

<svg class="defs" width="0" height="0">
  <defs>
    <linearGradient id="grey"><stop offset="0" stop-color="#2b2b2b" /><stop offset="1" stop-color="#dcdcdc" /></linearGradient>
    <radialGradient id="siri"><stop offset="0" stop-color="#fff" /><stop offset=".4" stop-color="#39a7e8" /><stop offset=".75" stop-color="#7a3fc8" /><stop offset="1" stop-color="#1b1b2c" /></radialGradient>
  </defs>
</svg>

<div class="screen">
  <header class="menubar">
    <svg class="apple" viewBox="0 0 26 32">
      <path d="M17.500 1c.3 3.500-2.300 6.500-5.300 6.500C11.800 4.300 14.500 1.300 17.500 1zM21.500 17c0-3 2.200-4.500 3-5-2-2.800-5-3-6-3-2.200 0-4 1.300-5.200 1.300S10.200 9 8.200 9C4.800 9 1 12 1 18c0 6 4.300 13 7.500 13 1.800 0 2.700-1.200 5-1.200 2.200 0 3 1.200 5 1.200 3 0 5.500-5 6.500-8-2-.8-3.500-3-3.500-6z" />
    </svg>
    <strong>Illustrator</strong>
    <nav>{#each menus as m}<span>{m}</span>{/each}</nav>
    <div class="status">
      <svg viewBox="1956 0 330 44">
        <path d="M1976 6c9-1 17 5 17 15 3 9-2 18-11 17-11 2-19-5-19-16-4-8 3-18 13-16z" fill="#fff" />
        <path d="M1971 22l5 5 9-10" fill="none" stroke="#171d2d" stroke-width="3" />
        <path d="M2005 9l14 14M2030 9l-26 27" fill="none" stroke="#fff" stroke-width="4" />
        <text x="2015" y="36" font-size="17" fill="#fff" stroke="#171d2d" stroke-width="4" paint-order="stroke" textLength="26" lengthAdjust="spacingAndGlyphs">Off</text>
        <path d="M2061 8h9v28h-9q-3 0-3-3V11q0-3 3-3zM2074 8h9q3 0 3 3v8h-12zM2074 24h12v9q0 3-3 3h-9z" fill="#fff" />
        <path d="M2125 34.500a9 9.500 0 0 1 0-19c3-8 15-9 19-3 7 1 11 9 8 16-1 3-4 5-7 6z" fill="none" stroke="#fff" stroke-width="3" />
        <path d="M2128 28c-5 1-7-6-2-7 5-1 7 6 12 10M2130 19c4-6 13-5 14 2 1 6-6 8-9 4l-4-5" fill="none" stroke="#fff" stroke-width="3" />
        <path d="M2139 25l6-5v3h6v4h-6v3zM2156 35l-6-5v3h-6v4h6v3z" fill="#17b1f2" stroke="#171d2d" stroke-width="3" paint-order="stroke" />
        <path d="M2186 14l16 15-8 8V8l8 8-16 14" fill="none" stroke="#fff" stroke-width="2" />
        <g fill="none" stroke="#fff" stroke-width="3.500"><path d="M2235 17c11-11 29-11 40 0M2241 23c8-8 20-8 28 0M2247.500 29c4-4.500 11-4.500 15 0" /></g>
        <circle cx="2255" cy="33.500" r="3" fill="#fff" />
      </svg>
      <svg class="vol" viewBox="0 0 30 44"><path d="M0 17h7l9-7v24l-9-7H0z" fill="#fff" /><path d="M21 16q5 6 0 12" fill="none" stroke="#fff" stroke-width="2.500" /></svg>
      <span class="pct">58%</span>
      <svg class="batt" viewBox="0 0 48 44"><rect x="1.500" y="11.500" width="38" height="22" rx="4" fill="none" stroke="#fff" stroke-width="2.500" /><path d="M5 15h17v15H5z" fill="#fff" /><path d="M42 18q5 4 0 9z" fill="#fff" /></svg>
      <span class="clock">Wed 00:28</span>
      <svg class="find" viewBox="0 0 30 44"><circle cx="11" cy="19" r="9" fill="none" stroke="#fff" stroke-width="3" /><path d="M18 26l10 10" stroke="#fff" stroke-width="3.500" /></svg>
      <svg class="siri" viewBox="0 0 32 44"><circle cx="16" cy="22" r="15" fill="url(#siri)" stroke="#d8d8e0" stroke-width="2" /><path d="M3 20l13 2 10-11-9 12 8 8-10-7-6 8 5-9z" fill="#fff" opacity=".85" /><path d="M18 9c6 1 9 5 10 9l-9 3z" fill="#f0559a" opacity=".8" /></svg>
      <svg class="list" viewBox="0 0 36 44"><path d="M0 14h4M8 14h28M0 22h4M8 22h22M0 30h4M8 30h28" stroke="#fff" stroke-width="4" /></svg>
    </div>
  </header>

  <main class="window">
    <div class="titlebar">
      <div class="lights"><i class="red"></i><i class="amber"></i><i class="green"></i></div>
      <svg class="home" viewBox="0 0 36 32"><path d="M18 0l18 19h-4v13H22V20h-8v12H4V19H0z" /></svg>
      <span class="rule"></span>
      <svg class="arrange" viewBox="0 0 34 22"><path d="M0 0h16v22H0zM18 0h16v10H18zM18 12h16v10H18z" /></svg>
      <span class="drop">{@render chevron()}</span>
      <h1>Adobe Illustrator 2020</h1>
      <svg class="bulb" viewBox="0 0 24 34"><path d="M8 22c0-5-6-6-6-12a10 9.500 0 0 1 20 0c0 6-6 7-6 12z" fill="none" stroke="#c4c4c4" stroke-width="2" /><path d="M8 23h8v7l-2 3h-4l-2-3z" fill="#c4c4c4" /></svg>
      <span class="rule"></span>
      <span class="essentials">Essentials</span>
      <span class="drop heavy">{@render chevron()}</span>
      <span class="rule"></span>
      <div class="stock">{@render lens()}<span>Search Adobe Stock</span></div>
    </div>

    <div class="body">
      <aside class="toolbar">
        <div class="strip">{@render fold('right')}</div>
        <div class="grip"></div>
        <ul class="tools">
          {#each tools as t}
            <li class:on={t.on}>
              <svg viewBox="2 0 76 48">
                {@html t.art}
                {#if t.more}<path d="M66 36v6h-7z" fill="#d8d8d8" />{/if}
              </svg>
            </li>
          {/each}
        </ul>
        <hr />
        <div class="pair">{@render swatches()}</div>
        <div class="modes"><i></i><i class="grad"></i><i class="none"></i></div>
        <svg class="draw" viewBox="2 1096 76 150">
          <circle cx="38" cy="1114" r="7.500" fill="none" stroke="#aaa" stroke-width="2" /><rect x="38" y="1114" width="12" height="12" rx="1" fill="#c4c4c4" />
          <rect x="23" y="1159" width="22" height="18" fill="#6e6e6e" stroke="#c4c4c4" stroke-width="2" /><path d="M23 1161h22" stroke="#c4c4c4" stroke-width="6" />
          <rect x="35" y="1153" width="22" height="18" fill="#6e6e6e" stroke="#c4c4c4" stroke-width="2" /><path d="M35 1155h22" stroke="#c4c4c4" stroke-width="6" />
          <g fill="#c4c4c4"><circle cx="29.500" cy="1230" r="3.600" /><circle cx="40" cy="1230" r="3.600" /><circle cx="50.500" cy="1230" r="3.600" /></g>
        </svg>
      </aside>

      <section class="document">
        <div class="doctabs">
          {#each docTabs as t}
            <div class="doctab" class:on={t.on}>{@render cross()}<span>{t.title}</span></div>
          {/each}
        </div>
        <div class="canvasrow">
          <svg class="canvas" viewBox="84 174 2256 1538">
            <rect x="427" y="258" width="979" height="1380" fill="#4e4e4e" />
            <rect x="428" y="256" width="976" height="1381" fill="#f2f2d9" stroke="#000" stroke-width="2" />
            <rect x="428" y="256" width="326" height="1381" fill="#010204" />
            <circle cx="590.500" cy="421" r="145" fill="#222220" />
            <g class="copy">
              <text x="849" y="298.500" font-size="35" textLength="352" lengthAdjust="spacingAndGlyphs" letter-spacing="6">AUGUSTINE’S CV</text>
              <text x="447" y="847.500" font-size="32" textLength="294" fill="#fff">07949199189</text>
              {#each copy as [t, x, y, w, size, weight, fill]}
                <text {x} {y} textLength={w} lengthAdjust="spacingAndGlyphs" font-size={size} font-weight={weight} {fill}>{t}</text>
              {/each}
            </g>
            {#each [804, 937] as y}
              <rect x="1340.500" y={y + .5} width="10" height="10" fill="none" stroke="#f07f86" stroke-width="2" />
              <path d="M1342.500 {y + 5.500}h6M1345.500 {y + 2.500}v6" stroke="#f07f86" stroke-width="1.600" />
            {/each}
            <g stroke="#4f80ff" stroke-width="2" fill="none">
              <rect x="448" y="912" width="226" height="198" />
              {#each underlines as [y, w]}<path d="M448 {y}h{w}" />{/each}
              <rect x="445" y="931" width="6" height="6" fill="#4f80ff" />
              {#each handles as [x, y]}<rect x={x - 5} y={y - 5} width="10" height="10" fill="#fff" />{/each}
              <path d="M674 1010h30" />
              <circle cx="710" cy="1010" r="7" fill="#fff" />
            </g>
          </svg>
          <div class="vscroll">
            <svg viewBox="0 0 18 10"><path d="M2 8l7-5.500L16 8" /></svg>
            <i></i>
            <svg viewBox="0 0 18 10"><path d="M2 2l7 5.500L16 2" /></svg>
          </div>
        </div>
        <footer class="statusbar">
          <div class="combo wide"><span>46.18%</span><b>{@render chevron()}</b></div>
          <svg class="nav" viewBox="229 1712 83 32"><path d="M247 1722v16M262 1722v16l-9-8zM292 1722v16l-10-8z" /></svg>
          <div class="combo"><span>1</span><b>{@render chevron()}</b></div>
          <svg class="nav next" viewBox="429 1712 83 32"><path d="M448 1722v16l10-8zM478 1722v16l9-8zM493 1722v16" /></svg>
          <div class="hint">Toggle Selection</div>
          <svg class="play" viewBox="0 0 36 32"><path d="M13 8v18l11-9z" /></svg>
          <div class="hscroll">
            <svg viewBox="0 0 10 18"><path d="M8 2L3 9l5 7" /></svg>
            <i></i>
            <svg viewBox="0 0 10 18"><path d="M2 2l5 7-5 7" /></svg>
          </div>
        </footer>
      </section>

      <aside class="layers">
        <div class="strip end">{@render fold('right')}</div>
        <div class="ptabs">
          <span class="on">Layers</span><span>Artboards</span><span>Properties</span><span>Libraries</span>
          {@render burger()}
        </div>
        <div class="tree">
          <div class="row top">
            {@render eye()}
            <span class="lock"></span>
            <span class="tint"><i></i></span>
            <span class="name">
              {@render chevron()}
              <svg class="thumb" viewBox="0 0 36 36"><path d="M0 0h36v36H0z" /><path d="M2 2h32v32H2z" fill="#fff" /><path d="M7 2h8v32H7z" fill="#111" /><path d="M15 2h14v32H15z" fill="#f2f2d9" /><path d="M16 5h12M16 9h12M16 13h8M16 17h11M16 21h8M16 27h11M16 31h11" stroke="#444" stroke-dasharray="2 .6" /><circle cx="11" cy="6.500" r="3" fill="#333" /><path d="M8 13h6M8 17h6M8 20h4" stroke="#aaa" /></svg>
              <b>Layer 1</b>
            </span>
            <span class="target"><svg viewBox="0 0 70 40"><circle cx="20" cy="20" r="7" /><path d="M40 14h12v12H40z" fill="#000" /><path d="M42 16h8v8h-8z" fill="#4f80ff" /><path d="M58 0h12v12z" fill="#c9c9c9" /></svg></span>
          </div>
          {#each layers as l}
            <div class="row">
              {@render eye()}
              <span class="lock">
                {#if l.locked}<svg viewBox="0 0 16 22"><path d="M3 10V6a5 4.500 0 0 1 10 0v4" fill="none" stroke="#c4c4c4" stroke-width="2.200" /><rect y="9" width="16" height="12" rx="1" fill="#c4c4c4" /><circle cx="8" cy="15" r="2" fill="#535353" /></svg>{/if}
              </span>
              <span class="tint"><i></i></span>
              <span class="name child">
                <svg class="thumb" viewBox="0 0 36 36">
                  <path d="M0 0h36v36H0z" /><path d="M2 2h32v32H2z" fill="#fff" />
                  {#if l.art === 'word'}
                    <text x="3" y={17 + l.size * .36} font-size={l.size} font-weight={l.weight} textLength="30" lengthAdjust="spacingAndGlyphs">{l.word}</text>
                  {:else if l.art === 'para'}
                    <g stroke="#000" stroke-width="1.400">
                      <path d="M2 11.500h31" stroke-dasharray="5 .4 3 .4" /><path d="M2 13.800h29" stroke-dasharray="3 .5 6 .4" /><path d="M2 16.100h26" stroke-dasharray="7 .5 2 .4" />
                      <path d="M2 18.400h29" stroke-dasharray="4 .4 5 .6" /><path d="M2 20.700h27" stroke-dasharray="6 .5 3 .5" /><path d="M2 23h31" stroke-dasharray="2 .5 5 .4" />
                    </g>
                  {:else if l.art === 'line'}
                    <path d="M3 17.500h30" stroke="#000" stroke-width="2.800" stroke-dasharray="2 .5 5 .4 3 .6" />
                  {:else if l.art === 'list'}
                    <path d="M4 11h9M2 15.500h13M2 20h13M2 24.500h32" stroke="#000" stroke-width="2.800" stroke-dasharray="2.600 .4" />
                  {:else if l.art === 'ellipse'}
                    <circle cx="18" cy="18" r="16" fill="#222220" />
                  {:else if l.art === 'bar'}
                    <path d="M14 2h8v32h-8z" />
                  {:else if l.art === 'cream'}
                    <path d="M7 2h22v32H7z" fill="#f2f2d9" />
                  {/if}
                </svg>
                <b>{l.name}</b>
              </span>
              <span class="target"><svg viewBox="0 0 70 40"><circle cx="20" cy="20" r="7" />{#if l.target}<circle cx="20" cy="20" r="11.200" class="thin" /><path d="M40 12h16v16H40z" fill="#000" /><path d="M42 14h12v12H42z" fill="#4f80ff" />{/if}</svg></span>
            </div>
          {/each}
        </div>
        <footer class="layerfoot">
          <span>1 Layer</span>
          <svg viewBox="2530 1706 300 36">
            <g fill="none" stroke="#c4c4c4" stroke-width="2">
              <path d="M2551 1717h-10v19h19v-11M2552 1713h12v11M2563 1714l-10 11" />
              <circle cx="2601" cy="1721" r="8" /><path d="M2607 1728l8 9" stroke-width="3.500" />
              <rect x="2651" y="1721" width="14" height="14" fill="#858585" stroke="#858585" /><rect x="2645" y="1715" width="13" height="14" /><path d="M2650 1720h7v8h-7z" fill="#fff" stroke="none" />
              <rect x="2706" y="1717" width="15" height="19" /><path d="M2713.500 1721v11M2708.500 1726h10M2693 1714v9h8M2699 1719l4 4-4 4" />
              <rect x="2751" y="1715" width="20" height="21" /><path d="M2761 1720v11M2755.500 1725.500h11" />
              <path d="M2800 1717h22M2807 1717v-3h8v3M2803 1718l1 18h14l1-18M2808 1721v12M2811 1721v12M2814 1721v12" stroke="#6e6e6e" />
            </g>
          </svg>
        </footer>
      </aside>
    </div>
  </main>

  <section class="float mini">
    <div class="bar">{@render cross()}{@render fold('right')}</div>
    <div class="grip"></div>
    <svg class="gradicon" viewBox="0 0 34 24"><rect x="1" y="1" width="32" height="22" fill="url(#grey)" stroke="#c4c4c4" stroke-width="2" /></svg>
  </section>

  <section class="float color">
    <div class="bar">{@render cross()}{@render fold('left')}</div>
    <div class="ptabs">
      <span class="on">{@render sort()}Color</span><span>Color Guide</span>
      {@render burger()}
    </div>
    <div class="mix">
      {@render swatches()}
      <div class="inks">
        {#each inks as ink}
          <div class="ink">
            <span class="tag">{ink}</span>
            <div class="slide"><div class="track {ink}"></div><svg viewBox="0 0 18 17"><path d="M9 0l9 8v6q0 2-2 2H2q-2 0-2-2V8z" /></svg></div>
            <span class="num">0</span><em>%</em>
          </div>
        {/each}
      </div>
    </div>
    <div class="quick"><i class="none"></i><i class="black"></i><i></i></div>
    <div class="spectrum"></div>
    <div class="lip"></div>
  </section>

  <section class="float character">
    <div class="bar">{@render cross()}{@render fold('left')}</div>
    <div class="ptabs">
      <span class="on">{@render sort()}Character</span><span>Paragraph</span><span>OpenType</span>
      {@render burger()}
    </div>
    <div class="fields">
      <div class="select">{@render lens()}<span>Myriad Pro</span><b>{@render chevron()}</b></div>
      <div class="select"><span class="style">Regular</span><b>{@render chevron()}</b></div>
      <hr />
      <div class="metrics">
        <svg viewBox="0 0 36 34"><path d="M10 3h26v7h-3l-1-3h-6v18h4v3H16v-3h4V7h-6l-1 3h-3z" /><path d="M0 13h16v5h-2l-1-2H9.500v10h2.500v2H4v-2h2.500V16H3l-1 2H0z" stroke="#535353" stroke-width=".6" /></svg>
        <div class="spin">{@render stepper()}<span>17 pt</span><b>{@render chevron()}</b></div>
        <svg class="second" viewBox="0 0 36 34"><path d="M12 16h22M12 33h22" stroke="#c4c4c4" stroke-width="2" /><path d="M15 15l7.500-14L31 15M18 10h10M15 32l7.500-14L31 32M18 27h10" fill="none" stroke="#c4c4c4" stroke-width="1.800" /><path d="M7 17v13" stroke="#c4c4c4" stroke-width="2.500" /><path d="M1 20l6-6 6 6zM1 28l6 6 6-6z" /></svg>
        <div class="spin">{@render stepper()}<span>(20.4 pt)</span><b>{@render chevron()}</b></div>
      </div>
      <div class="metrics">
        <svg viewBox="0 0 36 34"><path d="M1 4l7 16 7-16M11 26L24 0M17 20L26 3l7.500 17M20 15h11" fill="none" stroke="#c4c4c4" stroke-width="2" /><path d="M22 29h12" stroke="#c4c4c4" stroke-width="2" /><path d="M18 29l7-5v10z" /></svg>
        <div class="spin">{@render stepper()}<span>Auto</span><b>{@render chevron()}</b></div>
        <svg class="second" viewBox="0 0 36 34"><path d="M0 0h36v22H0z" /><path d="M4 3l6.500 15L17 3M16 20L24.500 4 32 20M19 14h11" fill="none" stroke="#4a4a4a" stroke-width="3" /><path d="M4 29h28" stroke="#c4c4c4" stroke-width="2" /><path d="M0 29l6-5v10zM36 29l-6-5v10z" /></svg>
        <div class="spin">{@render stepper()}<span>0</span><b>{@render chevron()}</b></div>
      </div>
      <hr class="short" />
      <div class="snap"><span>Snap to Glyph</span><svg viewBox="0 0 30 30"><circle cx="15" cy="15" r="13" /><path d="M13 13.500h3v8M12 21.500h7M14 8.500h3" /></svg></div>
      <div class="glyphs">
        <svg viewBox="0 0 48 48" class="on"><text x="7" y="34" font-size="30" textLength="34" lengthAdjust="spacingAndGlyphs">Ax</text><path d="M6 35h36" /></svg>
        <svg viewBox="0 0 48 48" class="on"><text x="7" y="34" font-size="30" textLength="34" lengthAdjust="spacingAndGlyphs">Ax</text><path d="M6 19h36" /></svg>
        <svg viewBox="0 0 48 48" class="on"><text x="9" y="32" font-size="29" textLength="31" lengthAdjust="spacingAndGlyphs">Ag</text><path d="M7 9h34v32H7z" /></svg>
        <svg viewBox="0 0 48 48" class="off"><text x="9" y="34" font-size="29" textLength="31" lengthAdjust="spacingAndGlyphs">Ag</text><path d="M6 19h36M6 35h36" /></svg>
        <i></i>
        <svg viewBox="0 0 48 48" class="on"><text x="11" y="34" font-size="30">A</text><path d="M26 9l12 30" /></svg>
        <svg viewBox="0 0 48 48" class="on"><text x="12" y="34" font-size="30">A</text><path d="M23 11h6v6h-6z" fill="#303030" /></svg>
      </div>
    </div>
  </section>

  <section class="float stack">
    <div class="bar">{@render cross()}{@render fold('right')}</div>
    <div class="grip"></div>
    <ul>
      <li><svg viewBox="0 0 36 36"><g fill="none" stroke="#c4c4c4" stroke-width="2"><rect x="7" y="6" width="20" height="22" /></g><path d="M2 2h6v6H2zM14 2h6v4h-6zM26 2h6v6h-6zM2 14h4v6H2zM28 14h4v6h-4zM2 26h6v6H2zM14 28h6v4h-6zM26 26h6v6h-6zM15.500 15.500h3v3h-3z" /></svg>Transform</li>
      <li><svg viewBox="0 0 36 36"><path d="M2 0h2v36H2zM6 5h16v12H6zM6 21h26v10H6z" /></svg>Align</li>
      <li><svg viewBox="0 0 36 36"><path d="M2 3h18v8h-9v10H2zM23 13h9v20H12V24h11zM12 13h9v8h-9z" /></svg>Pathfinder</li>
      <li><svg viewBox="0 0 36 36"><path d="M16 4H2v30h28V19" fill="none" stroke="#c4c4c4" stroke-width="3.500" /><path d="M20 0h16v15h-4V7l-8 8-3-3 8-8h-9z" /></svg>Asset Export</li>
    </ul>
  </section>

  <div class="dock">
    <ul>
      {#each apps as a}{@render dockItem(a)}{/each}
      <li class="split"></li>
      {#each tools2 as a}{@render dockItem(a)}{/each}
      <li class="split"></li>
      {#each windows as art}{@render dockItem({ art })}{/each}
      {@render dockItem({ art: '<path d="M5 4h23l-4 27H9z" fill="#777c81"/><path d="M5 4h23l-2 5H7z" fill="#e8ebee"/><path d="M11 11l2 18M16 11v18M22 11l-2 18" stroke="#565b60"/><circle cx="12" cy="4" r="3" fill="#fff"/><circle cx="20" cy="4" r="3" fill="#d7dde2"/>' })}
    </ul>
  </div>
</div>

<style>
  :global(body) { background: #060b16; overflow: hidden; }
  .screen {
    position: relative; width: 2880px; height: 1800px; overflow: hidden;
    display: flex; flex-direction: column;
    background: linear-gradient(90deg, #0a1122, #070c18 50%, #0b1a2e);
    font-family: "Noto Sans", "Open Sans", sans-serif; font-size: 21px; color: #dcdcdc;
  }
  .screen * { box-sizing: border-box; }
  .defs { position: absolute; }
  svg { display: block; flex: none; }
  ul { list-style: none; margin: 0; padding: 0; }
  i, b, em { font-style: normal; font-weight: inherit; }
  span { white-space: nowrap; }

  .menubar {
    height: 46px; flex: none; display: flex; align-items: center; padding: 0 46px 2px 41px;
    background: linear-gradient(90deg, #1b2741, #18203a 40%, #161c2d 75%); border-bottom: 2px solid #081228;
    font-family: Inter, "Liberation Sans", sans-serif; font-size: 28px; color: #fff;
  }
  .apple { width: 28px; height: 32px; fill: #fff; margin-top: -4px; }
  .menubar strong { width: 134px; margin-left: 40px; font-weight: 700; letter-spacing: -.6px; }
  .menubar nav { display: grid; grid-template-columns: 82px 85.500px 122.500px 98.500px 119.500px 114px 99px 140px 70px; margin-left: 39px; font-weight: 500; letter-spacing: -.35px; }
  .status { margin-left: auto; display: flex; align-items: center; font-weight: 500; height: 44px; }
  .status svg { height: 44px; width: 330px; }
  .status .vol { width: 30px; margin-left: 9px; }
  .pct { font-size: 25px; width: 60px; margin-left: 33px; letter-spacing: -.8px; font-weight: 400; }
  .status .batt { width: 48px; }
  .clock { width: 142px; margin-left: 31px; letter-spacing: -.3px; }
  .status .find { width: 30px; margin-left: 39px; }
  .status .siri { width: 32px; margin-left: 34px; }
  .status .list { width: 36px; margin-left: 24px; }

  .window {
    height: 1700px; flex: none; display: flex; flex-direction: column;
    border: 2px solid #393939; border-radius: 10px 10px 0 0; background: #535353; overflow: hidden;
  }
  .titlebar { height: 68px; flex: none; display: flex; align-items: center; border-bottom: 2px solid #393939; padding: 0 6px 0 16px; }
  .lights { display: flex; gap: 16px; }
  .lights i { width: 24px; height: 24px; border-radius: 50%; }
  .red { background: radial-gradient(#4d0000 0 4px, #ff5f57 4.500px); }
  .amber { background: #febc2e; }
  .green { background: #28c840; }
  .home { width: 36px; height: 32px; fill: #c4c4c4; margin-left: 30px; }
  .rule { width: 4px; height: 40px; background: #5c5c5c; margin: -2px 0 0 22px; }
  .arrange { width: 34px; height: 22px; fill: #c4c4c4; margin: -8px 0 0 16px; }
  .chev { width: 18px; height: 10px; fill: none; stroke: #f0f0f0; stroke-width: 2; }
  .drop { margin: -8px 0 0 16px; }
  .drop.heavy .chev { stroke-width: 3; }
  .titlebar h1 { margin: -2px 0 0 973px; width: 266px; font-size: 25px; font-weight: 400; color: #cdcdcd; white-space: nowrap; letter-spacing: .12px; }
  .bulb { width: 24px; height: 34px; margin: -2px 0 0 679px; }
  .bulb + .rule { margin-left: 24px; }
  .essentials { font-size: 25px; font-weight: 600; margin: -5px 0 0 25px; width: 123px; color: #e6e6e6; }
  .drop.heavy { margin: -2px 0 0 20px; }
  .drop.heavy + .rule { margin-left: 27px; }
  .stock { display: flex; align-items: center; width: 374px; height: 42px; margin: -1px 0 0 10px; padding-left: 6px; border: 2px solid #5e5e5e; border-radius: 6px; background: #454545; color: #828282; font-size: 24px; }
  .stock span { margin-left: 5px; letter-spacing: -.2px; }
  .lens { width: 40px; height: 28px; fill: none; stroke: #c4c4c4; stroke-width: 2; }

  .body { flex: 1; display: flex; min-height: 0; }
  .strip { height: 24px; flex: none; display: flex; align-items: center; padding: 0 9px; background: #434343; border-bottom: 2px solid #383838; }
  .strip.end { justify-content: flex-end; padding-right: 12px; }
  .fold { width: 16px; height: 12px; fill: none; stroke: #c4c4c4; stroke-width: 1.800; }
  .grip { width: 38px; height: 8px; background: repeating-linear-gradient(90deg, #3a3a3a 0 2px, transparent 2px 4px); flex: none; }

  .toolbar { width: 78px; flex: none; display: flex; flex-direction: column; border-right: 2px solid #383838; }
  .toolbar .grip { margin: 6px 0 24px 18px; }
  .tools li { height: 48px; }
  .tools svg { width: 76px; height: 48px; }
  .tools li.on { background: linear-gradient(#303030, #303030) 10px 2px / 56px 44px no-repeat; }
  .toolbar hr { width: 60px; height: 2px; margin: 4px 0 8px 8px; border: 0; background: #4a4a4a; flex: none; }
  .pair { padding-left: 8px; }
  .swatches { width: 66px; height: 98px; }
  .modes { display: flex; gap: 2px; width: 56px; height: 20px; padding: 2px; margin: 10px 0 8px 10px; background: #262626; }
  .modes i { flex: 1; background: #fff; }
  .modes .grad { background: linear-gradient(90deg, #fff, #333); }
  .modes .none, .quick .none { background: linear-gradient(to bottom right, #fff 43%, #f00 43% 57%, #fff 57%); }
  .draw { width: 76px; height: 150px; }

  .document { flex: 1; min-width: 0; display: flex; flex-direction: column; margin-left: 2px; border-left: 2px solid #383838; border-right: 2px solid #383838; }
  .doctabs { height: 58px; flex: none; display: flex; background: #434343; border-bottom: 2px solid #383838; }
  .doctab { display: flex; align-items: center; width: 534px; padding: 0 0 2px 15px; border-right: 2px solid #383838; color: #b4b4b4; font-weight: 600; }
  .doctab:first-child { width: 528px; }
  .doctab:nth-child(3) { width: 518px; }
  .doctab.on { background: #535353; color: #f4f4f4; }
  .doctab span { margin: -1px 0 0 19px; letter-spacing: .12px; }
  .cross { width: 14px; height: 14px; fill: none; stroke: #b4b4b4; stroke-width: 2.200; }
  .doctab.on .cross { stroke: #f0f0f0; }
  .canvasrow { flex: 1; display: flex; min-height: 0; }
  .canvas { width: 2256px; height: 1538px; background: #606060; }
  .copy { font-family: "Open Sans", "Noto Sans", sans-serif; word-spacing: -.05em; }
  .vscroll { width: 32px; display: flex; flex-direction: column; align-items: center; justify-content: space-between; padding: 11px 0 14px; background: #4a4a4a; }
  .vscroll svg { width: 18px; height: 10px; fill: none; stroke: #8c8c8c; stroke-width: 2; }
  .vscroll i { width: 30px; height: 50px; border-radius: 12px; background: #5f5f5f; margin-top: 2px; }

  .statusbar { height: 32px; flex: none; display: flex; overflow: hidden; font-size: 20px; }
  .combo { width: 117px; display: flex; height: 40px; border: 2px solid #5c5c5c; border-radius: 6px; background: #454545; color: #f0f0f0; font-weight: 500; }
  .combo.wide { width: 138px; margin-left: 7px; }
  .combo span { flex: 1; padding-left: 6px; line-height: 37px; }
  .combo b { width: 35px; border-left: 2px solid #5c5c5c; background: #4b4b4b; padding: 15px 0 0 6px; }
  .nav { width: 83px; height: 32px; fill: #6e6e6e; stroke: #6e6e6e; stroke-width: 2; }
  .hint { width: 401px; text-align: center; line-height: 40px; font-size: 20px; font-weight: 500; color: #c4c4c4; border-left: 2px solid #4d4d4d; border-right: 2px solid #4d4d4d; }
  .play { width: 35px; height: 32px; fill: #c4c4c4; }
  .hscroll { flex: 1; display: flex; align-items: center; background: #4a4a4a; padding: 2px 45px 0 11px; }
  .hscroll svg { width: 10px; height: 18px; fill: none; stroke: #a4a4a4; stroke-width: 2; }
  .hscroll i { width: 50px; height: 30px; border-radius: 12px; background: #5f5f5f; margin: 0 auto 0 662px; }

  .layers { width: 502px; flex: none; display: flex; flex-direction: column; border-left: 2px solid #383838; }
  .ptabs { height: 54px; flex: none; display: flex; background: #434343; border-bottom: 2px solid #383838; font-weight: 600; }
  .ptabs span { width: 106px; flex: none; height: 52px; line-height: 48px; padding-left: 16px; overflow: hidden; color: #a8a8a8; border-right: 2px solid #383838; }
  .ptabs span.on { background: #535353; color: #f4f4f4; height: 54px; }
  .burger { width: 20px; height: 16px; margin: 19px 12px 0 auto; stroke: #b8b8b8; stroke-width: 2; }
  .layers .ptabs span { letter-spacing: -.1px; }
  .layers .ptabs span.on { width: 104px; padding-left: 17px; }
  .sort { width: 12px; height: 18px; fill: none; stroke: #9a9a9a; stroke-width: 1.600; }
  .tree { flex: 1; margin: 12px 10px 7px; border: 2px solid #5e5e5e; border-radius: 5px; overflow: hidden; }
  .row { display: flex; height: 42px; border-bottom: 2px solid #5e5e5e; }
  .row > span, .row > :global(span) { border-right: 2px solid #5e5e5e; display: flex; align-items: center; }
  .row.top { background: #4f6579; }
  .row.top > span { border-color: #5f7183; }
  .eye { width: 42px; padding: 0 0 4px 7px; }
  .eye svg { width: 24px; height: 16px; fill: #c4c4c4; }
  .eye circle { fill: #4a4a4a; }
  .eye .pupil { fill: #c4c4c4; }
  .lock { width: 42px; padding-left: 12px; }
  .lock svg { width: 16px; height: 22px; }
  .tint { width: 12px; padding-left: 2px; }
  .tint i { width: 6px; height: 36px; background: #4f80ff; }
  .name { width: 310px; padding-left: 12px; font-weight: 500; }
  .name .chev { margin-right: 18px; }
  .name.child { padding-left: 94px; }
  .name b { margin: 1px 0 0 10px; letter-spacing: -.05px; }
  .thumb { width: 36px; height: 36px; }
  .thumb text { font-family: "Open Sans", sans-serif; }
  .row > .target { flex: 1; border: 0; }
  .target svg { width: 70px; height: 40px; }
  .target circle { fill: none; stroke: #b8b8b8; stroke-width: 2; }
  .target .thin { stroke-width: 1.500; }
  .layerfoot { height: 38px; flex: none; display: flex; padding-left: 11px; font-weight: 500; }
  .layerfoot span { width: 141px; line-height: 38px; font-size: 20px; }
  .layerfoot svg { width: 300px; height: 36px; }

  .float { position: absolute; border: 2px solid #383838; border-radius: 10px 10px 0 0; background: #535353; box-shadow: 0 2px 12px rgba(0, 0, 0, .4); }
  .bar { height: 26px; display: flex; align-items: center; justify-content: space-between; padding: 0 13px 0 9px; background: #434343; border-bottom: 2px solid #383838; border-radius: 8px 8px 0 0; }
  .mini { left: 1858px; top: 224px; width: 78px; height: 110px; }
  .mini .grip { margin: 6px 0 0 18px; }
  .gradicon { width: 34px; height: 24px; margin: 20px 0 0 22px; }

  .color { left: 1812px; top: 334px; width: 500px; height: 434px; display: flex; flex-direction: column; }
  .float .ptabs span { display: flex; align-items: flex-start; }
  .float .sort { margin: 16px 9px 0 0; }
  .float .ptabs span.on { padding-left: 9px; }
  .color .ptabs span.on { width: 104px; }
  .color .ptabs span + span { width: 156px; letter-spacing: .15px; }
  .mix { display: flex; padding: 12px 0 0 10px; }
  .inks { margin: 4px 0 0 22px; }
  .ink { display: flex; height: 50px; align-items: flex-start; }
  .tag { width: 26px; text-align: center; line-height: 45px; color: #d0d0d0; font-weight: 500; }
  .slide { width: 256px; padding: 16px 0 0 8px; height: 42px; }
  .track { width: 224px; height: 9px; margin-left: 9px; border: solid #606060; border-width: 0 1px 2px; }
  .slide svg { width: 18px; height: 17px; fill: #c4c4c4; margin-top: -1px; }
  .track.C { background: linear-gradient(90deg, #fff, #8ed0f5 50%, #00b6ed 70%, #009ee3); }
  .track.M { background: linear-gradient(90deg, #fff, #f19ac3 50%, #e6007e); }
  .track.Y { background: linear-gradient(90deg, #fff, #fff28a 60%, #ffed00 90%); }
  .track.K { background: linear-gradient(90deg, #fff, #9d9d9c 50%, #1d1d1b); }
  .num { width: 72px; height: 42px; border: 2px solid #5e5e5e; border-radius: 6px; background: #454545; padding-left: 9px; line-height: 35px; color: #fff; font-weight: 500; }
  .ink em { margin-left: 2px; line-height: 44px; color: #c8c8c8; font-size: 20px; }
  .quick { display: flex; gap: 2px; width: 80px; height: 28px; padding: 2px; margin: 12px 0 0 10px; background: #262626; }
  .quick i { flex: 1; background: #fff; }
  .quick .black { background: #000; }
  .spectrum {
    width: 450px; height: 46px; margin: 20px 0 0 12px; border: 2px solid #262626;
    background: linear-gradient(180deg, #fff, rgba(255, 255, 255, .5) 22%, transparent 50%, rgba(0, 0, 0, .2) 66%, #000 100%),
      linear-gradient(90deg, #e30613, #ef7d1a 9%, #f6e93a 17%, #79b829 30%, #5fb43a 38%, #5fbdb0 46%, #18b0e8 54%, #1d4f9f 66%, #4a3f94 75%, #9a4a9c 84%, #e6007e 91%, #e30613 99%);
  }
  .lip { margin-top: auto; height: 16px; flex: none; border-top: 4px solid #383838; }

  .character { left: 1780px; top: 750px; width: 484px; height: 453px; }
  .character .ptabs span.on { width: 148px; }
  .character .ptabs span + span { width: 132px; }
  .character .ptabs span + span + span { width: 122px; }
  .fields { padding: 12px 10px 0; color: #f4f4f4; font-weight: 500; }
  .select { display: flex; width: 460px; height: 42px; margin-bottom: 10px; border: 2px solid #5e5e5e; border-radius: 6px; background: #454545; align-items: center; }
  .select .lens { margin-left: 2px; }
  .select span { margin: -1px auto 0 10px; }
  .select .style { margin-left: 12px; }
  .select b, .spin b { width: 37px; height: 38px; border-left: 2px solid #5e5e5e; background: #4b4b4b; display: flex; align-items: center; justify-content: center; }
  .spin b { padding-right: 2px; width: 38px; }
  .fields hr { margin: 11px 0; height: 2px; border: 0; background: #4a4a4a; }
  .fields hr.short { width: 448px; margin: 12px 0 20px; }
  .metrics { display: flex; align-items: center; height: 42px; margin-bottom: 10px; }
  .metrics > svg { width: 36px; height: 34px; fill: #c4c4c4; }
  .metrics .second { margin-left: 24px; }
  .spin { display: flex; align-items: center; width: 176px; height: 42px; margin-left: 6px; border: 2px solid #5e5e5e; border-radius: 6px; background: #454545; }
  .stepper { width: 36px; height: 38px; fill: none; stroke: #f0f0f0; stroke-width: 2; background: #4b4b4b; border-right: 2px solid #5e5e5e; }
  .spin span { margin: -2px auto 0 7px; }
  .snap { display: flex; align-items: center; height: 30px; color: #c8c8c8; font-weight: 500; }
  .snap span { width: 155px; margin-top: -2px; letter-spacing: -.2px; }
  .snap svg { width: 30px; height: 30px; fill: none; stroke: #c4c4c4; stroke-width: 2.200; }
  .glyphs { display: flex; gap: 26px; margin: 20px 0 0 2px; align-items: center; }
  .glyphs svg { width: 48px; height: 48px; border-radius: 6px; fill: none; stroke: #fff; stroke-width: 2; }
  .glyphs text { fill: #fff; stroke: none; font-family: Lato, "Open Sans", sans-serif; font-weight: 400; }
  .glyphs .on { background: #303030; }
  .glyphs .off { stroke: #a4a4a4; }
  .glyphs .off text { fill: #a4a4a4; }
  .glyphs i { width: 2px; height: 52px; background: #4a4a4a; margin: -4px -1px; }

  .stack { left: 1854px; top: 1228px; width: 238px; height: 278px; }
  .stack .grip { margin: 6px auto 0; }
  .stack ul { padding-top: 5px; }
  .stack li { display: flex; align-items: center; height: 56px; padding-left: 22px; color: #f0f0f0; font-weight: 600; }
  .stack li svg { width: 36px; height: 36px; fill: #c4c4c4; margin-right: 16px; }

  .dock { width: 2831px; height: 60px; margin: 2px 0 0 24px; border: 2px solid #3a4150; border-radius: 8px; background: #151c2b; flex: none; }
  .dock ul { display: flex; }
  .dock li { width: 37.750px; flex: none; padding: 3px 0 0 3px; }
  .dock .app { width: 32px; height: 32px; }
  .dock li i { display: block; width: 6px; height: 6px; border-radius: 50%; background: #9aa0aa; margin: 5px 0 0 13px; }
  .dock .split { width: 18px; height: 36px; border-right: 2px solid #4d5462; padding: 0; margin: 5px 8px 0 -8px; }
</style>
